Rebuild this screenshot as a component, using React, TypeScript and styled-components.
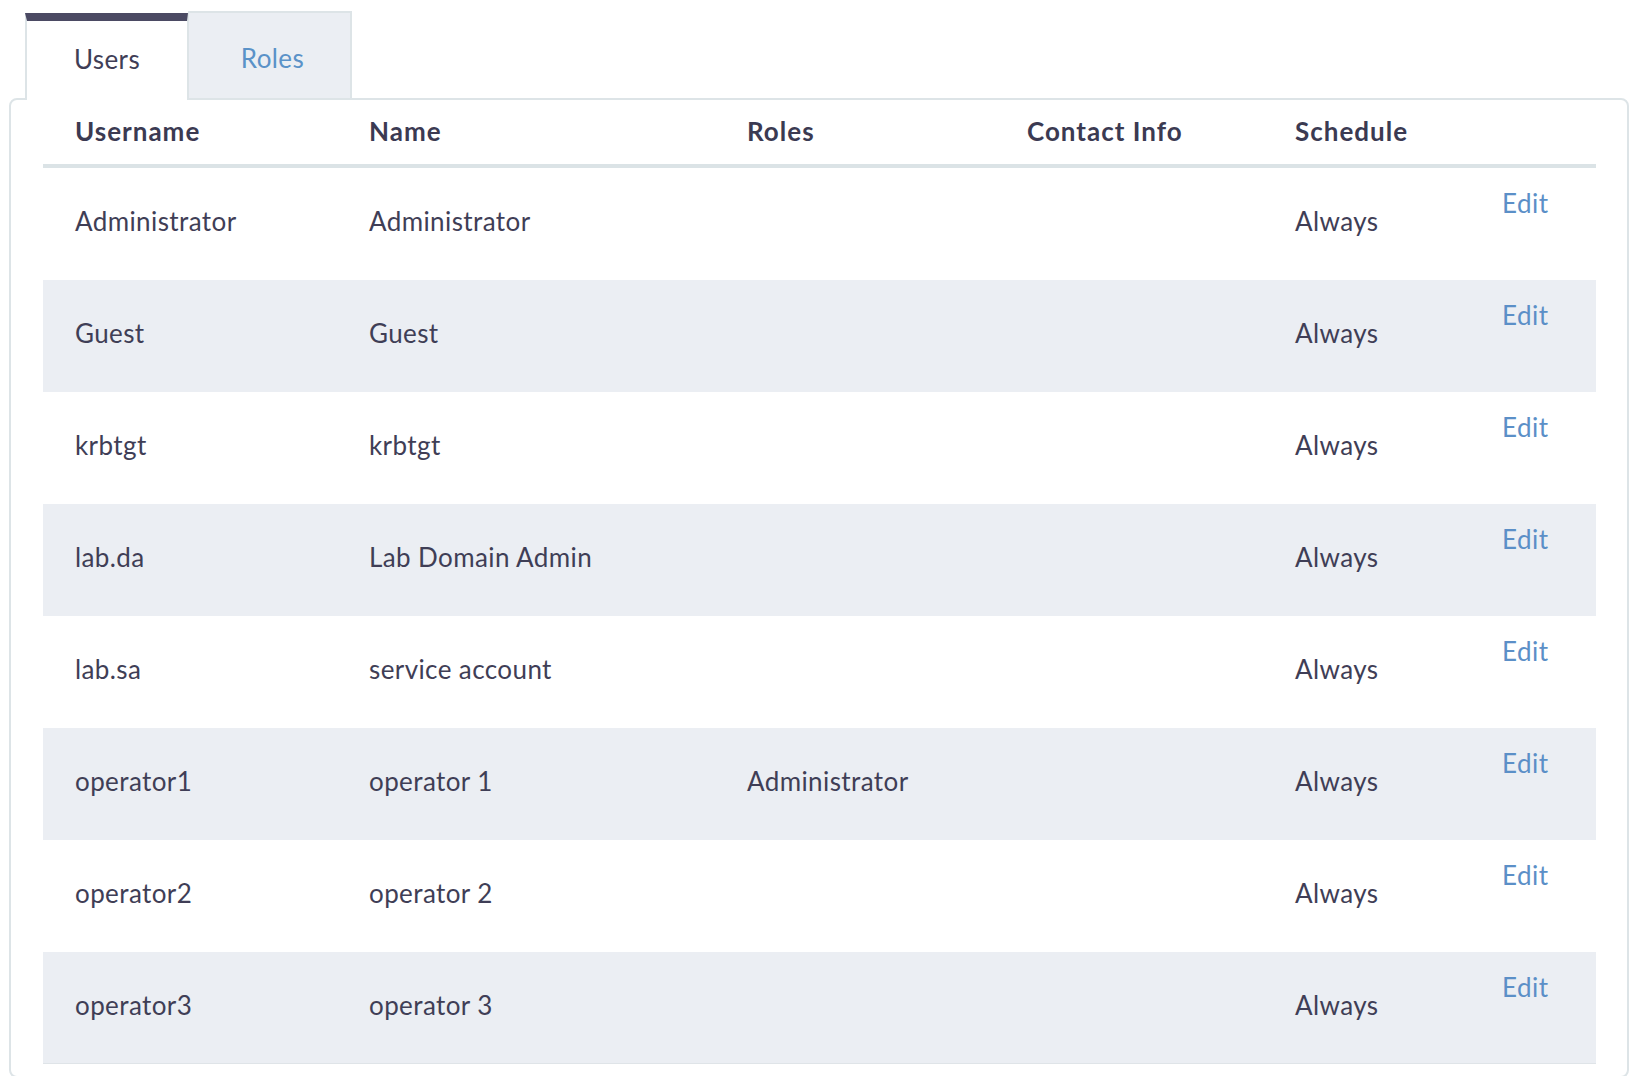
import React from "react";
import styled, { createGlobalStyle } from "styled-components";

const GlobalStyle = createGlobalStyle`
  html, body {
    margin: 0;
    padding: 0;
    background: #ffffff;
  }
  body {
    font-family: "Lato", "Open Sans", "Noto Sans", sans-serif;
    color: #3f3e56;
  }
`;

const Page = styled.div`
  padding: 11px 0 0 9px;
  width: 1620px;
`;

const TabBar = styled.div`
  display: flex;
  align-items: flex-end;
  margin-left: 16px;
  position: relative;
  z-index: 1;
  margin-bottom: -2px;
`;

const Tab = styled.div<{ $active?: boolean }>`
  box-sizing: border-box;
  display: flex;
  align-items: center;
  justify-content: center;
  font-size: 26px;
  letter-spacing: 0.4px;
  padding-bottom: 4px;
  ${(p) =>
    p.$active
      ? `
    width: 163px;
    height: 87px;
    background: #ffffff;
    color: #3f3e56;
    border-top: 8px solid #4b4a63;
    border-left: 2px solid #dde4e7;
    border-right: 1px solid #dde4e7;
  `
      : `
    width: 164px;
    height: 89px;
    padding-top: 9px;
    padding-left: 6px;
    background: #ebeef3;
    color: #5a92c8;
    border: 2px solid #dde4e7;
    border-left: 1px solid #dde4e7;
  `}
`;

const Panel = styled.div`
  box-sizing: border-box;
  width: 1620px;
  border: 2px solid #dde4e7;
  border-radius: 8px;
  padding: 0 31px 0 32px;
  min-height: 980px;
`;

const COLS = "294px 378px 280px 268px 207px 1fr";

const HeaderRow = styled.div`
  display: grid;
  grid-template-columns: ${COLS};
  height: 64px;
  align-items: center;
  border-bottom: 4px solid #dbe3e6;
`;

const HeadCell = styled.div`
  padding-left: 32px;
  padding-bottom: 2px;
  font-size: 26px;
  font-weight: 700;
  letter-spacing: 1px;
  color: #3b3a52;
`;

const Row = styled.div<{ $shaded?: boolean; $last?: boolean }>`
  display: grid;
  grid-template-columns: ${COLS};
  height: 112px;
  align-items: center;
  background: ${(p) => (p.$shaded ? "#ebeef3" : "#ffffff")};
  box-sizing: border-box;
  border-bottom: ${(p) => (p.$last ? "1px solid #dfe4e8" : "none")};
`;

const Cell = styled.div`
  padding-left: 32px;
  padding-bottom: 6px;
  font-size: 26px;
  letter-spacing: 0.4px;
  color: #3f3e56;
`;

const EditCell = styled.div`
  align-self: start;
  padding-top: 19px;
  padding-left: 32px;
  font-size: 26px;
  letter-spacing: 0.5px;
`;

const EditLink = styled.a`
  color: #5b8fc7;
  text-decoration: none;
  cursor: pointer;
`;

const users = [
  { username: "Administrator", name: "Administrator", roles: "", contact: "", schedule: "Always" },
  { username: "Guest", name: "Guest", roles: "", contact: "", schedule: "Always" },
  { username: "krbtgt", name: "krbtgt", roles: "", contact: "", schedule: "Always" },
  { username: "lab.da", name: "Lab Domain Admin", roles: "", contact: "", schedule: "Always" },
  { username: "lab.sa", name: "service account", roles: "", contact: "", schedule: "Always" },
  { username: "operator1", name: "operator 1", roles: "Administrator", contact: "", schedule: "Always" },
  { username: "operator2", name: "operator 2", roles: "", contact: "", schedule: "Always" },
  { username: "operator3", name: "operator 3", roles: "", contact: "", schedule: "Always" },
];

export default function App() {
  return (
    <>
      <GlobalStyle />
      <Page>
        <TabBar>
          <Tab $active>Users</Tab>
          <Tab>Roles</Tab>
        </TabBar>
        <Panel>
          <HeaderRow>
            <HeadCell>Username</HeadCell>
            <HeadCell>Name</HeadCell>
            <HeadCell>Roles</HeadCell>
            <HeadCell>Contact Info</HeadCell>
            <HeadCell>Schedule</HeadCell>
            <HeadCell />
          </HeaderRow>
          {users.map((u, i) => (
            <Row key={u.username} $shaded={i % 2 === 1} $last={i === users.length - 1}>
              <Cell>{u.username}</Cell>
              <Cell>{u.name}</Cell>
              <Cell>{u.roles}</Cell>
              <Cell>{u.contact}</Cell>
              <Cell>{u.schedule}</Cell>
              <EditCell>
                <EditLink>Edit</EditLink>
              </EditCell>
            </Row>
          ))}
        </Panel>
      </Page>
    </>
  );
}
